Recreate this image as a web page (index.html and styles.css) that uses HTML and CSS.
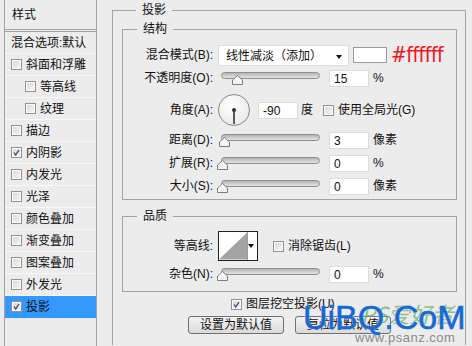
FILE: index.html
```html
<!DOCTYPE html>
<html lang="zh">
<head>
    <meta charset="UTF-8">
    <meta name="viewport" content="width=device-width, initial-scale=1.0">
    <title>图层样式 - 投影</title>
    <link rel="stylesheet" href="styles.css">
</head>
<body>
<div class="dialog">
    <div class="sidebar">
        <div class="side-head">样式</div>
        <div class="side-item">混合选项:默认</div>
        <div class="side-item"><span class="cb"></span>斜面和浮雕</div>
        <div class="side-item sub"><span class="cb"></span>等高线</div>
        <div class="side-item sub"><span class="cb"></span>纹理</div>
        <div class="side-item"><span class="cb"></span>描边</div>
        <div class="side-item"><span class="cb checked"><svg viewBox="0 0 11 11"><polyline points="2.5,5.5 4.5,8.5 8.5,2.5"/></svg></span>内阴影</div>
        <div class="side-item"><span class="cb"></span>内发光</div>
        <div class="side-item"><span class="cb"></span>光泽</div>
        <div class="side-item"><span class="cb"></span>颜色叠加</div>
        <div class="side-item"><span class="cb"></span>渐变叠加</div>
        <div class="side-item"><span class="cb"></span>图案叠加</div>
        <div class="side-item"><span class="cb"></span>外发光</div>
        <div class="side-item active"><span class="cb checked"><svg viewBox="0 0 11 11"><polyline points="2.5,5.5 4.5,8.5 8.5,2.5"/></svg></span>投影</div>
    </div>

    <div class="main">
        <fieldset class="group outer">
            <legend>投影</legend>

            <fieldset class="group">
                <legend>结构</legend>
                <div class="rows">
                    <div class="row">
                        <span class="lbl">混合模式(B):</span>
                        <div class="select">线性减淡（添加）<span class="caret"></span></div>
                        <span class="swatch"></span>
                        <span class="hex">#ffffff</span>
                    </div>
                    <div class="row">
                        <span class="lbl">不透明度(O):</span>
                        <div class="slider"><div class="track"></div><svg class="thumb" style="left:14px" viewBox="0 0 11 10"><path d="M0.5 9.5V5L5.5 0.5L10.5 5V9.5Z"/></svg></div>
                        <span class="num">15</span>
                        <span class="unit">%</span>
                    </div>
                    <div class="row angle">
                        <span class="lbl">角度(A):</span>
                        <div class="dial"><span class="hand"></span></div>
                        <span class="num">-90</span>
                        <span class="unit">度</span>
                        <label class="check"><span class="cb"></span>使用全局光(G)</label>
                    </div>
                    <div class="row">
                        <span class="lbl">距离(D):</span>
                        <div class="slider"><div class="track"></div><svg class="thumb" style="left:1px" viewBox="0 0 11 10"><path d="M0.5 9.5V5L5.5 0.5L10.5 5V9.5Z"/></svg></div>
                        <span class="num">3</span>
                        <span class="unit">像素</span>
                    </div>
                    <div class="row">
                        <span class="lbl">扩展(R):</span>
                        <div class="slider"><div class="track"></div><svg class="thumb" style="left:-1px" viewBox="0 0 11 10"><path d="M0.5 9.5V5L5.5 0.5L10.5 5V9.5Z"/></svg></div>
                        <span class="num">0</span>
                        <span class="unit">%</span>
                    </div>
                    <div class="row">
                        <span class="lbl">大小(S):</span>
                        <div class="slider"><div class="track"></div><svg class="thumb" style="left:-1px" viewBox="0 0 11 10"><path d="M0.5 9.5V5L5.5 0.5L10.5 5V9.5Z"/></svg></div>
                        <span class="num">0</span>
                        <span class="unit">像素</span>
                    </div>
                </div>
            </fieldset>

            <fieldset class="group quality">
                <legend>品质</legend>
                <div class="rows">
                    <div class="row contour-row">
                        <span class="lbl">等高线:</span>
                        <div class="contour">
                            <svg viewBox="0 0 29 28"><rect width="29" height="28" fill="#fff"/><polygon points="0,28 29,0 29,28" fill="#a3a3a3"/></svg>
                            <span class="caret"></span>
                        </div>
                        <label class="check"><span class="cb"></span>消除锯齿(L)</label>
                    </div>
                    <div class="row">
                        <span class="lbl">杂色(N):</span>
                        <div class="slider"><div class="track"></div><svg class="thumb" style="left:-1px" viewBox="0 0 11 10"><path d="M0.5 9.5V5L5.5 0.5L10.5 5V9.5Z"/></svg></div>
                        <span class="num">0</span>
                        <span class="unit">%</span>
                    </div>
                </div>
            </fieldset>

            <label class="check knockout"><span class="cb checked"><svg viewBox="0 0 11 11"><polyline points="2.5,5.5 4.5,8.5 8.5,2.5"/></svg></span>图层挖空投影(U)</label>

            <div class="buttons">
                <button type="button">设置为默认值</button>
                <button type="button">复位为默认值</button>
            </div>
        </fieldset>

        <div class="watermark">
            <span class="wm-green">PS爱好者</span>
            <span class="wm-blue">UiBQ.CoM</span>
            <span class="wm-url">www.psanz.com</span>
        </div>
    </div>
</div>
</body>
</html>
```

FILE: styles.css
```css
html, body { margin: 0; padding: 0; }
body { width: 472px; height: 346px; overflow: hidden; background: #ececec; color: #111; font: 12px/16px "Liberation Sans", "Noto Sans CJK SC", sans-serif; }
.dialog { display: flex; height: 346px; }

/* left list */
.sidebar { width: 91px; margin-left: 4px; border-left: 1px solid #a3a3a3; border-right: 1px solid #a3a3a3; }
.side-head { height: 29px; line-height: 30px; padding-left: 7px; border-bottom: 3px double #a3a3a3; }
.side-item { display: flex; align-items: center; gap: 4px; height: 21px; padding-left: 6px; border-bottom: 1px solid #f8f8f8; white-space: nowrap; }
.side-item.sub { padding-left: 20px; }
.side-item.active { background: #3399ff; border-bottom-color: #3399ff; }

.cb { width: 11px; height: 11px; box-sizing: border-box; flex: none; border: 1px solid #929292; background: linear-gradient(135deg, #d8d8d8, #f6f6f6); box-shadow: inset 0 0 0 1px #fafafa; }
.cb svg { display: block; width: 9px; height: 9px; }
.cb polyline { fill: none; stroke: #3d4f86; stroke-width: 1.6; }

/* right area */
.main { position: relative; margin-left: 15px; }
.group { margin: 0; padding: 0; min-width: 0; border: 1px solid #a3a3a3; }
.group legend { margin-left: 14px; padding: 0 6px; line-height: 16px; }
.outer { width: 354px; box-sizing: border-box; margin-top: 2px; padding: 3px 8px 11px 9px; border-bottom: 0; }
.outer > .group { width: 335px; box-sizing: border-box; }
.quality { margin-top: 8px !important; }

.rows { display: flex; flex-direction: column; gap: 1px; padding: 7px 0 2px; }
.quality .rows { padding: 6px 0 6px; }
.row { display: flex; align-items: center; height: 22px; white-space: nowrap; }
.row.angle { height: 34px; margin: 3px 0 1px; }
.row.contour-row { height: 32px; }
.lbl { width: 90px; text-align: right; margin-right: 5px; flex: none; }

.select { position: relative; width: 131px; height: 21px; box-sizing: border-box; padding-left: 7px; line-height: 20px; background: #fff; border: 1px solid #dedede; }
.caret { position: absolute; right: 6px; top: 9px; border-left: 3px solid transparent; border-right: 3px solid transparent; border-top: 4px solid #111; }
.swatch { width: 34px; height: 16px; box-sizing: border-box; margin-left: 4px; background: #fff; border: 1px solid #9a9a9a; }
.hex { margin-left: 4px; color: #f0141c; font-size: 21px; line-height: 22px; font-family: "DejaVu Sans Condensed", "Liberation Sans", sans-serif; letter-spacing: -0.5px; }

.slider { position: relative; width: 104px; height: 14px; flex: none; }
.track { margin: 1px 2px 0 3px; height: 5px; border: 1px solid #8f8f8f; border-radius: 4px; background: linear-gradient(#b4b4b4, #e4e4e4); }
.thumb { position: absolute; top: 4px; width: 11px; height: 10px; }
.thumb path { fill: #f4f4f4; stroke: #7d7d7d; }

.num { width: 40px; height: 17px; box-sizing: border-box; margin-left: 7px; padding-left: 4px; line-height: 16px; background: #fff; border: 1px solid #dcdcdc; }
.angle .num { margin-left: 8px; }
.unit { margin-left: 4px; }
.angle .unit { margin-left: 3px; }

.dial { position: relative; width: 32px; height: 32px; box-sizing: border-box; flex: none; border: 1px solid #8a8a8a; border-radius: 50%; background: radial-gradient(circle at 40% 35%, #ffffff, #e4e4e4); }
.hand { position: absolute; left: 14px; top: 14px; width: 2px; height: 15px; background: #5a5a5a; }
.hand::before { content: ""; position: absolute; left: -1px; top: -1px; width: 4px; height: 4px; border-radius: 50%; background: #333; }

.check { display: flex; align-items: center; gap: 4px; }
.angle .check { margin-left: 10px; }
.contour-row .check { margin-left: 15px; }

.contour { position: relative; width: 40px; height: 30px; box-sizing: border-box; display: flex; border: 1px solid #222; background: #fff; }
.contour svg { width: 28px; height: 28px; border-right: 1px solid #9a9a9a; }
.contour .caret { top: 12px; right: 3px; }

.knockout { height: 18px; margin: 3px 0 0 109px; }
.buttons { display: flex; justify-content: center; gap: 11px; margin-top: 3px; }
button { width: 96px; height: 18px; padding: 0; font: inherit; line-height: 16px; color: #111; border: 1px solid #707070; border-radius: 3px; background: linear-gradient(#f4f4f4, #dadada); }

/* site watermark over the buttons */
.watermark { position: absolute; left: 191px; top: 294px; width: 170px; height: 52px; }
.wm-green { position: absolute; left: 58px; top: 6px; color: #6aa86a; font: italic 22px/26px "Noto Sans CJK SC", sans-serif; opacity: 0.7; }
.wm-blue { position: absolute; left: 0; top: 5px; color: #1469d6; font: 34px/36px "Liberation Sans", sans-serif; -webkit-text-stroke: 0.6px #1469d6; text-shadow: 0 0 2px #fff; }
.wm-url { position: absolute; left: 52px; top: 37px; color: #8a8a8a; font: 13px/14px "Liberation Sans", sans-serif; letter-spacing: 0.5px; }
```
